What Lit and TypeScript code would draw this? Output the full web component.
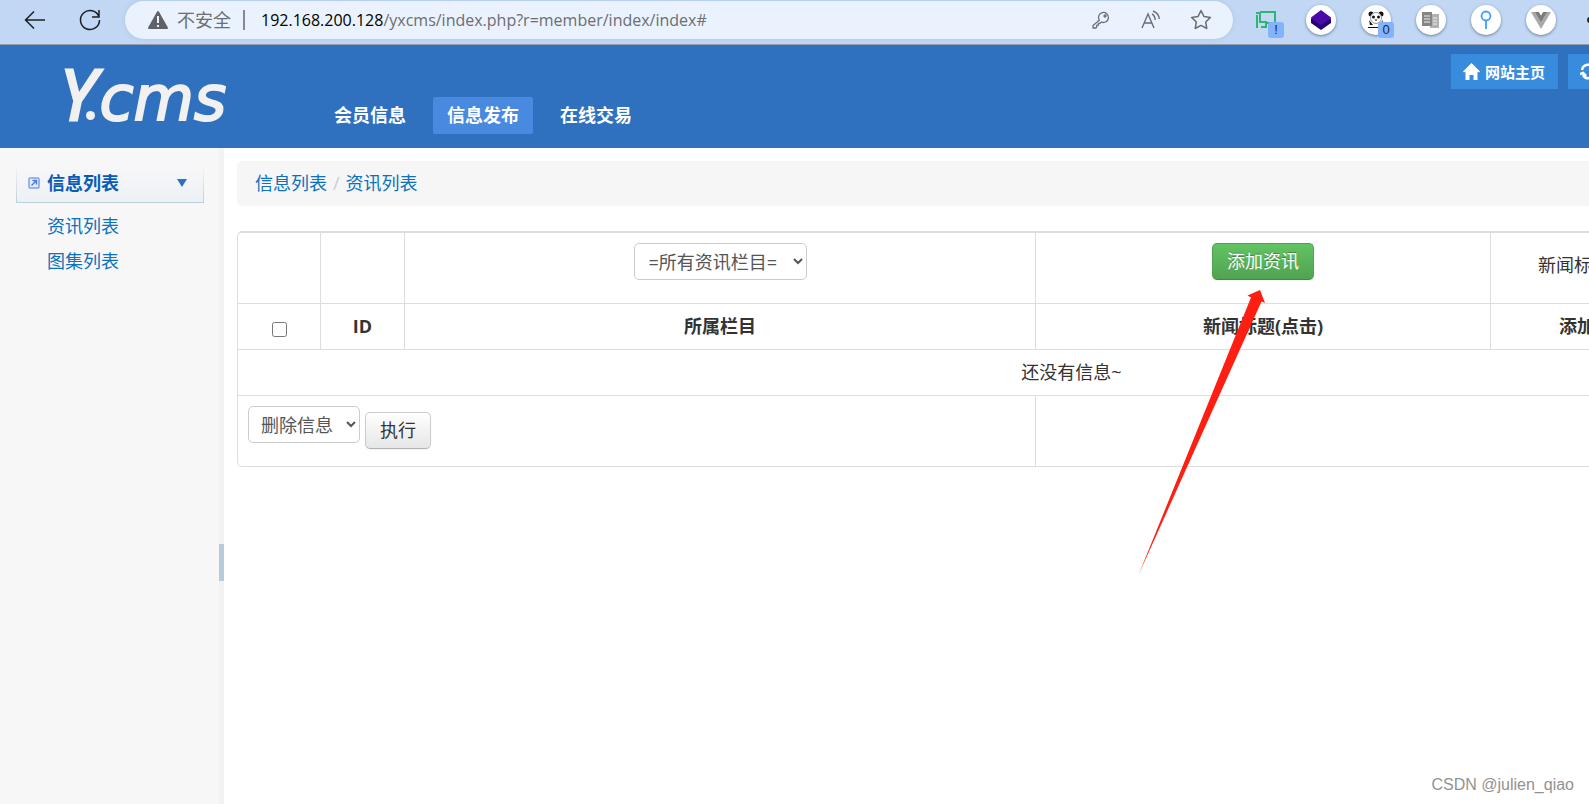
import { LitElement, html, css } from "lit";
import { customElement } from "lit/decorators.js";

const sans = css`"Open Sans", "Noto Sans CJK SC", sans-serif`;

@customElement("browser-bar")
class BrowserBar extends LitElement {
  static styles = css`
    :host {
      display: flex;
      align-items: center;
      box-sizing: border-box;
      height: 45px;
      padding: 0 0 5px 20px;
      overflow: hidden;
      background: #c1d7f3;
      border-bottom: 1px solid #929eae;
      font: 17px/24px ${sans};
      color: #6b6e72;
    }
    button {
      display: grid;
      place-items: center;
      flex: none;
      padding: 0;
      border: 0;
      background: none;
      color: inherit;
    }
    svg {
      display: block;
    }
    .line {
      fill: none;
      stroke: currentColor;
    }
    .nav {
      width: 30px;
      height: 30px;
      margin-right: 25px;
      color: #1c1f23;
    }
    .address {
      display: flex;
      align-items: center;
      flex: 1;
      height: 38px;
      padding: 0 20px 0 22px;
      margin: 0 18px 0 -5px;
      border-radius: 19px;
      background: #eaf3fd;
      box-shadow: 0 0 4px #aac5e6;
      white-space: nowrap;
    }
    .warn {
      margin-right: 8px;
      flex: none;
    }
    .state {
      font-size: 18px;
    }
    .divider {
      width: 2px;
      height: 20px;
      margin: 0 16px 0 12px;
      background: #85898e;
    }
    .url {
      flex: 1;
      font-size: 16px;
    }
    .host {
      color: #000;
    }
    .tools {
      display: flex;
      gap: 26px;
    }
    .tools button {
      width: 24px;
      height: 24px;
    }
    .extensions {
      display: flex;
      gap: 25px;
      flex: none;
    }
    .ext {
      position: relative;
      width: 30px;
      height: 30px;
      border-radius: 50%;
      background: #fff;
      box-shadow: 0 1px 3px #6d7f96;
    }
    .plain {
      background: none;
      box-shadow: none;
    }
    .badge {
      position: absolute;
      right: -3px;
      bottom: -3px;
      width: 16px;
      height: 16px;
      border-radius: 3px;
      background: #84b2fb;
      color: #1a2a44;
      font: 13px/16px "Liberation Sans", sans-serif;
      text-align: center;
    }
    .more {
      width: 6px;
      height: 6px;
      margin: 12px -4px 0 6px;
      border-radius: 50%;
      background: #222;
    }
  `;

  render() {
    return html`
      <button class="nav" aria-label="返回">
        <svg class="line" width="22" height="22" viewBox="0 0 22 22" stroke-width="1.5"><path d="M21 11H1.500M10 2.500L1.500 11l8.500 8.500" /></svg>
      </button>
      <button class="nav" aria-label="刷新">
        <svg class="line" width="24" height="24" viewBox="0 0 24 24" stroke-width="1.500"><path d="M21 9A9.500 9.500 0 1 0 21.500 12M21 2v7h-7" /></svg>
      </button>
      <div class="address">
        <svg class="warn" width="22" height="20" viewBox="0 0 22 20">
          <path d="M11 2L20 18H2z" fill="#606266" stroke="#606266" stroke-linejoin="round" stroke-width="2" />
          <path d="M11 6v7M11 15v2" stroke="#eaf3fd" stroke-width="2" />
        </svg>
        <span class="state">不安全</span>
        <span class="divider"></span>
        <span class="url"><span class="host">192.168.200.128</span>/yxcms/index.php?r=member/index/index#</span>
        <div class="tools">
          <button aria-label="密码">
            <svg class="line" width="18" height="18" viewBox="0 0 18 18" stroke-width="1.300"><path d="M7.300 9.200A5 5 0 1 1 9.400 11L8 12.300H6.500v1.800H4.800v1.700L3.800 17H1v-2.600z" stroke-linejoin="round" /><circle cx="13" cy="5" r="1" /></svg>
          </button>
          <button aria-label="朗读">
            <svg class="line" width="20" height="20" viewBox="0 0 20 20" stroke-width="1.400"><path d="M1 18L7 4l6 14M3.300 13h7.500M11 4c2 1 3 3 3.200 6M12 1c4 1.500 6 4.500 6.300 8" /></svg>
          </button>
          <button aria-label="收藏">
            <svg class="line" width="22" height="22" viewBox="0 0 22 22" stroke-width="1.500" stroke-linejoin="round"><path d="M11 1.500l2.900 5.900 6.500 1-4.700 4.600 1.100 6.500-5.800-3.100-5.800 3.100 1.100-6.500L1.600 8.400l6.500-1z" /></svg>
          </button>
        </div>
      </div>
      <div class="extensions">
        <button class="ext plain" aria-label="扩展一">
          <svg width="22" height="20" viewBox="0 0 22 20" fill="none" stroke="#2bb673" stroke-width="2"><path d="M5 2h15v11h-9M5 2v10h6v5H6M1 3h3M2 5v13" /></svg>
          <span class="badge">!</span>
        </button>
        <button class="ext" aria-label="扩展二">
          <svg width="22" height="22" viewBox="0 0 22 22"><path d="M1 10v4l10 7 10-7v-4z" fill="#23006e" /><path d="M11 1l10 7.500v1L11 16 1 9.500v-1z" fill="#4b08ab" /></svg>
        </button>
        <button class="ext" aria-label="扩展三">
          <svg width="18" height="20" viewBox="0 0 18 20" fill="#111"><circle cx="4" cy="4" r="2.500" /><circle cx="14" cy="4" r="2.500" /><circle cx="9" cy="8" r="5.500" fill="#fff" stroke="#999" /><circle cx="6.500" cy="7" r="1.500" /><circle cx="11.500" cy="7" r="1.500" /><path d="M7.500 9.500h3L9 11zM2 10l4 5H3zM16 10l-4 5h3zM1 17h16v1H1z" /></svg>
          <span class="badge">0</span>
        </button>
        <button class="ext" aria-label="扩展四">
          <svg width="20" height="20" viewBox="0 0 20 20"><path d="M9 4h9v14H9z" fill="#b2b2b2" /><path d="M1 2h10v14H1z" fill="#858585" /><path d="M3 6h6M3 9h6M3 12h6M12 8h4M12 11h4M12 14h4" stroke="#eee" /></svg>
        </button>
        <button class="ext" aria-label="扩展五">
          <svg width="14" height="20" viewBox="0 0 14 20" fill="none" stroke="#409eff" stroke-width="1.800"><circle cx="7" cy="6" r="4.500" /><path d="M7 10.500V19" /></svg>
        </button>
        <button class="ext" aria-label="扩展六">
          <svg width="22" height="20" viewBox="0 0 22 20"><path d="M1 2h20L11 19z" fill="#a9a9a9" /><path d="M5 2h4l2 3.500L13 2h4l-6 10z" fill="#7c7c7c" /><path d="M9 2h4L11 5.500z" fill="#fff" /></svg>
        </button>
        <span class="more"></span>
      </div>
    `;
  }
}

@customElement("site-header")
class SiteHeader extends LitElement {
  static styles = css`
    :host {
      display: flex;
      box-sizing: border-box;
      height: 103px;
      overflow: hidden;
      background: #2f71bf;
      font: bold 18px/26px ${sans};
    }
    .logo {
      display: flex;
      align-items: baseline;
      width: 260px;
      flex: none;
      padding: 6px 0 0 60px;
      line-height: 84px;
      text-decoration: none;
      font-style: italic;
      font-weight: 400;
      color: #f1f1f1;
      box-sizing: border-box;
    }
    .initial {
      font-family: "Open Sans", sans-serif;
      font-size: 70px;
      -webkit-text-stroke: 3px #f1f1f1;
    }
    .dot {
      width: 9px;
      height: 9px;
      margin: 0 4px 0 -9px;
      border-radius: 50%;
      background: #f1f1f1;
    }
    .rest {
      font-family: "DejaVu Sans", sans-serif;
      font-size: 62px;
      -webkit-text-stroke: 2px #f1f1f1;
    }
    nav {
      display: flex;
      align-items: flex-start;
      gap: 13px;
      flex: 1;
      padding: 52px 0 0 60px;
    }
    nav a {
      padding: 5px 14px 6px;
      border-radius: 2px;
      color: #fff;
      text-decoration: none;
      white-space: nowrap;
    }
    nav .current {
      background: #488ae0;
    }
    .actions {
      display: flex;
      gap: 10px;
      padding-top: 9px;
      height: 35px;
    }
    .actions a {
      display: flex;
      align-items: center;
      gap: 5px;
      box-sizing: border-box;
      width: 107px;
      padding-left: 12px;
      overflow: hidden;
      background: #378cde;
      color: #fff;
      font-size: 15px;
      text-decoration: none;
      white-space: nowrap;
    }
    .actions .clip {
      width: 21px;
    }
    svg {
      flex: none;
    }
  `;

  render() {
    return html`
      <a class="logo" href="#" aria-label="Y.cms"><span class="initial">Y</span><span class="dot"></span><span class="rest">cms</span></a>
      <nav>
        <a href="#">会员信息</a>
        <a href="#" class="current">信息发布</a>
        <a href="#">在线交易</a>
      </nav>
      <div class="actions">
        <a href="#"><svg width="17" height="17" viewBox="0 0 17 17"><path d="M8.500 0L17 8.500l-1 1-1.500-1V17h-4v-5h-4v5h-4V8.500L1 9.500l-1-1z" fill="#fff" /></svg>网站主页</a>
        <a href="#" class="clip" aria-label="刷新"><svg width="17" height="17" viewBox="0 0 17 17" fill="none" stroke="#fff" stroke-width="2.500"><path d="M2 7a6.500 6.500 0 0 1 12-2M15 10a6.500 6.500 0 0 1-12 2M0 11l3-1 3 3" /></svg></a>
      </div>
    `;
  }
}

@customElement("side-menu")
class SideMenu extends LitElement {
  static styles = css`
    :host {
      display: flex;
      flex: none;
      width: 224px;
      background: #f7f7f7;
      font: 18px/35px ${sans};
    }
    .menu {
      flex: 1;
      padding: 18px 15px 0 16px;
    }
    .title {
      display: flex;
      align-items: center;
      box-sizing: border-box;
      width: 100%;
      height: 37px;
      padding: 0 16px 2px 11px;
      border: 1px solid #bccfda;
      border-top: 0;
      border-image: linear-gradient(#f7f7f7, #bccfda) 1;
      background: linear-gradient(#f7f7f9, #edf1f5);
      color: #0a5bb8;
      font: inherit;
      font-weight: bold;
    }
    .label {
      flex: 1;
      padding-left: 7px;
      text-align: left;
    }
    ul {
      margin: 6px 0 0;
      padding: 0 0 0 31px;
      list-style: none;
    }
    a {
      color: #0b72bd;
      text-decoration: none;
    }
    .splitter {
      display: flex;
      align-items: center;
      width: 5px;
      padding-top: 173px;
      background: #f2f2f2;
      box-sizing: border-box;
    }
    .handle {
      width: 5px;
      height: 37px;
      background: #b9cadc;
    }
  `;

  render() {
    return html`
      <div class="menu">
        <button class="title" aria-expanded="true">
          <svg width="12" height="12" viewBox="0 0 12 12" fill="none"><rect x="1" y="1" width="10" height="10" rx="1" stroke="#7f9dee" stroke-width="1.500" fill="#e5edff" /><path d="M3.500 8.500L8 4M4.500 3.500h4v4" stroke="#4a78df" stroke-width="1.400" /></svg>
          <span class="label">信息列表</span>
          <svg width="10" height="8" viewBox="0 0 10 8"><path d="M0 0h10L5 8z" fill="#2f71bf" /></svg>
        </button>
        <ul>
          <li><a href="#">资讯列表</a></li>
          <li><a href="#">图集列表</a></li>
        </ul>
      </div>
      <div class="splitter"><span class="handle"></span></div>
    `;
  }
}

@customElement("news-list")
class NewsList extends LitElement {
  static styles = css`
    :host {
      display: block;
      flex: 1;
      min-width: 0;
      padding: 13px 0 0 13px;
      overflow: hidden;
      font: 18px/25px ${sans};
      color: #333;
    }
    .crumbs {
      display: flex;
      gap: 6px;
      padding: 10px 18px;
      border-radius: 5px 0 0 5px;
      background: #f6f6f6;
      color: #ccc;
    }
    .crumbs a {
      color: #0b72bd;
      text-decoration: none;
    }
    table {
      width: 1669px;
      margin-top: 25px;
      table-layout: fixed;
      border: 1px solid #ddd;
      border-left: 0;
      border-radius: 5px;
      border-collapse: separate;
      border-spacing: 0;
    }
    th,
    td {
      height: 25px;
      padding: 10px;
      border-top: 1px solid #ddd;
      border-left: 1px solid #ddd;
      text-align: center;
      vertical-align: top;
      white-space: nowrap;
    }
    tr:first-child > :first-child {
      border-top-left-radius: 5px;
    }
    tr:last-child > :first-child {
      border-bottom-left-radius: 5px;
    }
    .filters td,
    .batch td {
      height: 50px;
    }
    .check {
      width: 83px;
    }
    .id {
      width: 84px;
    }
    .category {
      width: 631px;
    }
    .headline {
      width: 455px;
    }
    .filters .search {
      padding: 20px 0 0 47px;
      text-align: left;
    }
    .date {
      padding-left: 68px;
      text-align: left;
    }
    input {
      display: block;
      width: 15px;
      height: 15px;
      margin: 8px auto 0;
    }
    select,
    button {
      box-sizing: border-box;
      height: 37px;
      border: 1px solid #ccc;
      border-radius: 5px;
      font: inherit;
    }
    select {
      padding: 0 8px;
      background: #fff;
      color: #555;
    }
    .wide {
      width: 173px;
      padding-left: 10px;
    }
    .action {
      width: 112px;
    }
    button {
      padding: 0 14px;
      border-bottom-color: #b3b3b3;
      background: linear-gradient(#fff, #e6e6e6);
      box-shadow: 0 1px 2px #0000000d;
      color: #333;
    }
    .add {
      border-color: #51a351 #51a351 #3f8a43;
      background: linear-gradient(#62c462, #51a351);
      color: #fff;
      text-shadow: 0 -1px 0 #00000040;
    }
    .controls {
      display: flex;
      gap: 5px;
    }
    .controls button {
      margin-top: 6px;
    }
  `;

  render() {
    return html`
      <nav class="crumbs"><a href="#">信息列表</a><span>/</span><a href="#">资讯列表</a></nav>
      <table>
        <colgroup>
          <col class="check" /><col class="id" /><col class="category" /><col class="headline" /><col />
        </colgroup>
        <tbody>
          <tr class="filters">
            <td></td>
            <td></td>
            <td><select class="wide" aria-label="资讯栏目"><option>=所有资讯栏目=</option></select></td>
            <td><button class="add">添加资讯</button></td>
            <td class="search">新闻标题</td>
          </tr>
          <tr>
            <th><input type="checkbox" aria-label="全选" /></th>
            <th>ID</th>
            <th>所属栏目</th>
            <th>新闻标题(点击)</th>
            <th class="date">添加时间</th>
          </tr>
          <tr>
            <td colspan="5">还没有信息~</td>
          </tr>
          <tr class="batch">
            <td colspan="3">
              <div class="controls">
                <select class="action" aria-label="批量操作"><option>删除信息</option></select>
                <button>执行</button>
              </div>
            </td>
            <td colspan="2"></td>
          </tr>
        </tbody>
      </table>
    `;
  }
}

@customElement("app-root")
class AppRoot extends LitElement {
  static styles = css`
    :host {
      position: relative;
      display: flex;
      flex-direction: column;
      min-height: 100vh;
      overflow: hidden;
      background: #fff;
    }
    .body {
      display: flex;
      flex: 1;
    }
    .pointer {
      position: absolute;
      left: 1138px;
      top: 290px;
      pointer-events: none;
    }
    .mark {
      position: absolute;
      right: 15px;
      bottom: 9px;
      color: #929292;
      font: 16px/20px "Liberation Sans", sans-serif;
    }
  `;

  render() {
    return html`
      <browser-bar></browser-bar>
      <site-header></site-header>
      <div class="body">
        <side-menu></side-menu>
        <news-list></news-list>
      </div>
      <svg class="pointer" width="128" height="286" viewBox="0 0 128 286"><path d="M122 0l5 13-3.500-1.500L.500 285 113 7.500l-3.500-2z" fill="#ff1e12" /></svg>
      <span class="mark">CSDN @julien_qiao</span>
    `;
  }
}
